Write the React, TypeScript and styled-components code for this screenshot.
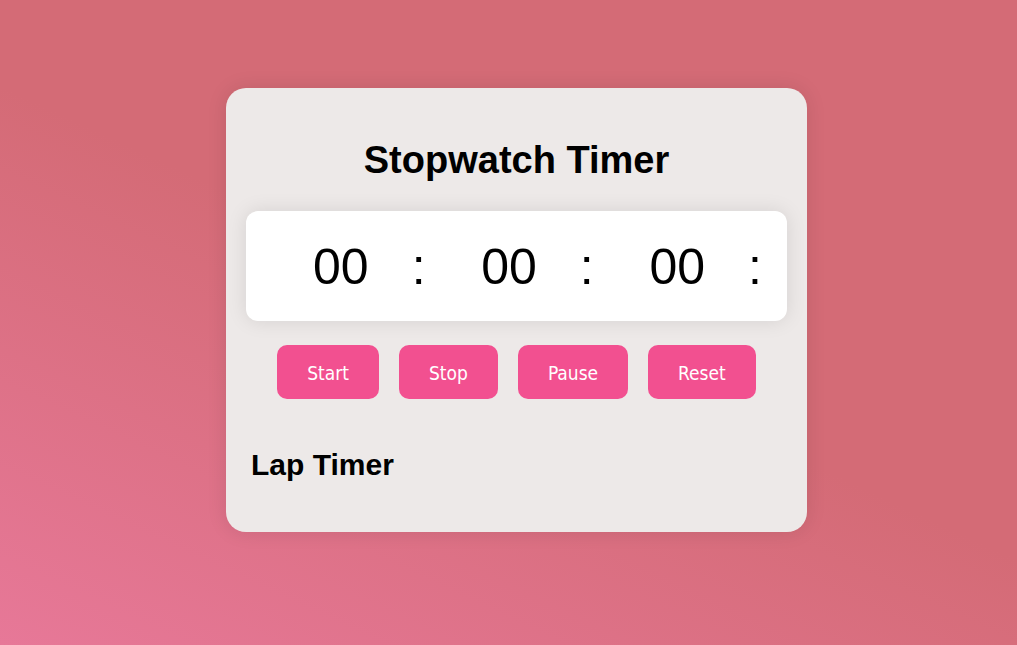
import React, { useEffect, useState } from "react";
import styled, { createGlobalStyle } from "styled-components";

const GlobalStyle = createGlobalStyle`
  *, *::before, *::after { box-sizing: border-box; }
  body {
    margin: 0;
    font-family: "Liberation Sans", Arial, sans-serif;
    color: #000;
  }
`;

const Page = styled.main`
  min-height: 100vh;
  display: flex;
  align-items: center;
  justify-content: center;
  padding: 16px 0 41px 16px;
  background: linear-gradient(25deg, #e77898 0%, #d46b76 50%);
`;

const Card = styled.section`
  width: 100%;
  max-width: 581px;
  padding: 50px 20px;
  border-radius: 20px;
  background: #ede9e8;
  box-shadow: 0 0 20px rgba(0, 0, 0, 0.1);
`;

const Title = styled.h1`
  margin: 0 0 29px;
  font-size: 38px;
  line-height: 44px;
  text-align: center;
`;

const Display = styled.div`
  display: flex;
  align-items: center;
  justify-content: space-between;
  padding: 28px 25px 26px 67px;
  border-radius: 12px;
  background: #fff;
  box-shadow: 0 0 20px rgba(0, 0, 0, 0.1);
  font-size: 50px;
  line-height: 56px;
`;

const Unit = styled.span`
  display: flex;
  gap: 43px;
`;

const Controls = styled.div`
  display: flex;
  justify-content: center;
  gap: 20px;
  margin-top: 24px;
`;

const Button = styled.button`
  padding: 16px 30px 14px;
  border: 0;
  border-radius: 10px;
  background: #f25090;
  color: #fff;
  font-family: Tahoma, "DejaVu Sans Condensed", "DejaVu Sans", sans-serif;
  font-stretch: condensed;
  font-size: 19px;
  line-height: 24px;
  cursor: pointer;
`;

const LapTitle = styled.h2`
  margin: 49px 5px 0;
  font-size: 30px;
  line-height: 34px;
`;

const LapList = styled.ol`
  margin: 0;
  padding: 0 0 0 32px;
`;

const pad = (n: number) => String(n).padStart(2, "0");

const format = (ticks: number) => [
  pad(Math.floor(ticks / 6000)),
  pad(Math.floor(ticks / 100) % 60),
  pad(ticks % 100),
];

export default function App() {
  const [ticks, setTicks] = useState(0);
  const [running, setRunning] = useState(false);
  const [laps, setLaps] = useState<string[]>([]);

  useEffect(() => {
    if (!running) return;
    const id = setInterval(() => setTicks((t) => t + 1), 10);
    return () => clearInterval(id);
  }, [running]);

  const stop = () => {
    if (running) setLaps((list) => [...list, format(ticks).join(" : ")]);
    setRunning(false);
  };

  const reset = () => {
    setRunning(false);
    setTicks(0);
    setLaps([]);
  };

  return (
    <>
      <GlobalStyle />
      <Page>
        <Card>
          <Title>Stopwatch Timer</Title>
          <Display role="timer">
            {format(ticks).map((value, i) => (
              <Unit key={i}>
                <span>{value}</span>
                <span>:</span>
              </Unit>
            ))}
          </Display>
          <Controls>
            <Button type="button" onClick={() => setRunning(true)}>Start</Button>
            <Button type="button" onClick={stop}>Stop</Button>
            <Button type="button" onClick={() => setRunning(false)}>Pause</Button>
            <Button type="button" onClick={reset}>Reset</Button>
          </Controls>
          <LapTitle>Lap Timer</LapTitle>
          <LapList>
            {laps.map((lap, i) => (
              <li key={i}>{lap}</li>
            ))}
          </LapList>
        </Card>
      </Page>
    </>
  );
}
